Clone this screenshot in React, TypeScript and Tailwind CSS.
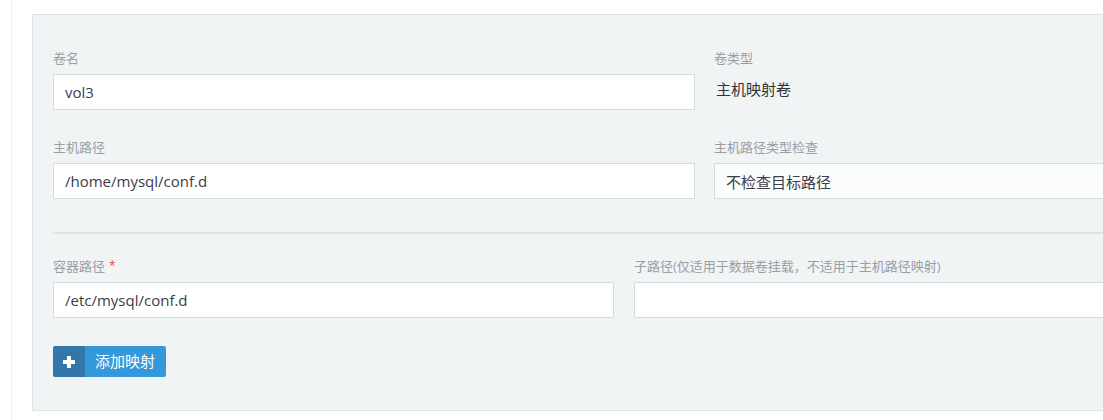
import React from 'react';

// 卷映射表单
function Field({ label, value, required, readOnlyText, width, inputBg = 'bg-white' }: {
  label: string;
  value?: string;
  required?: boolean;
  readOnlyText?: string;
  width?: string;
  inputBg?: string;
}) {
  return (
    <div className={width ?? 'flex-1'}>
      <label className="block text-[13px] leading-[18px] text-[#999ea3] mb-[7px]">
        {label}
        {required && <span className="ml-[4px] text-[#e74c3c] text-[12px] align-top">*</span>}
      </label>
      {readOnlyText !== undefined ? (
        <div className="h-[36px] flex items-center pb-[6px] pl-[2px] text-[15px] text-[#333]">{readOnlyText}</div>
      ) : (
        <input
          readOnly
          value={value ?? ''}
          className={`block w-full h-[36px] border border-[#d4dcdf] ${inputBg} px-[11px] text-[15px] text-[#3a3d4a] outline-none`}
        />
      )}
    </div>
  );
}

export default function App() {
  return (
    <div className="w-[1103px] h-[420px] overflow-hidden bg-white font-['Open_Sans','Noto_Sans_CJK_SC',sans-serif]">
      <div className="ml-[11px] h-full border-l border-[#eeeff0] pl-[20px] pt-[14px]">
        <div className="w-[1400px] border border-[#dde3e6] bg-[#f1f4f5] px-[20px] pt-[34px] pb-[33px]">
          {/* 第一行 */}
          <div className="flex gap-[19px]">
            <Field label="卷名" value="vol3" width="w-[642px]" />
            <Field label="卷类型" readOnlyText="主机映射卷" />
          </div>

          {/* 第二行 */}
          <div className="flex gap-[19px] mt-[28px]">
            <Field label="主机路径" value="/home/mysql/conf.d" width="w-[642px]" />
            <Field label="主机路径类型检查" value="不检查目标路径" inputBg="bg-[#fbfcfc]" />
          </div>

          <div className="mt-[33px] h-[2px] bg-[#dfe4e6]" />

          {/* 容器路径 */}
          <div className="flex gap-[20px] mt-[23px]">
            <Field label="容器路径" required value="/etc/mysql/conf.d" width="w-[561px]" />
            <Field label="子路径(仅适用于数据卷挂载，不适用于主机路径映射)" value="" />
          </div>

          {/* 添加按钮 */}
          <button className="mt-[28px] flex h-[31px] items-stretch rounded-[2px] overflow-hidden">
            <span className="w-[32px] bg-[#3277a8] flex items-center justify-center">
              <svg width="12" height="12" viewBox="0 0 12 12">
                <rect x="4" y="0" width="4" height="12" fill="#fff" />
                <rect x="0" y="4" width="12" height="4" fill="#fff" />
              </svg>
            </span>
            <span className="bg-[#3498db] pl-[10px] pr-[11px] flex items-center text-[15px] text-white">添加映射</span>
          </button>
        </div>
      </div>
    </div>
  );
}
